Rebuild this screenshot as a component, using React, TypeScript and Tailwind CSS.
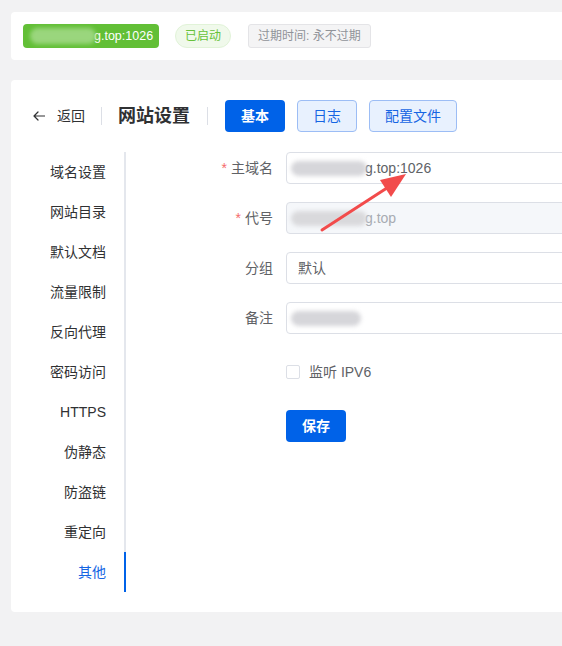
import React from "react";

const font = { fontFamily: '"Liberation Sans", Arial, "Noto Sans CJK SC", sans-serif' };

function Blur({ w, className }: { w: number; className: string }) {
  return <span className={"inline-block h-[15px] rounded-full blur-[2px] " + className} style={{ width: w }} />;
}

const menu = ["域名设置", "网站目录", "默认文档", "流量限制", "反向代理", "密码访问", "HTTPS", "伪静态", "防盗链", "重定向", "其他"];

export default function App() {
  return (
    <div className="w-[562px] h-[646px] overflow-hidden bg-[#f2f2f3] relative" style={font}>
      <div className="w-[620px] ml-[11px] pt-[12px]">
        {/* top card */}
        <div className="bg-white rounded-[4px] h-[48px] flex items-center px-[12px]">
          <div className="h-[24px] w-[136px] rounded-[4px] bg-[#62bf36] flex items-center pl-[7px] text-white text-[12px]">
            <span className="inline-block h-[16px] w-[66px] rounded-full bg-[#9ad67d] blur-[2px]" />
            <span className="-ml-[2px] text-[12.5px]">g.top:1026</span>
          </div>
          <div className="ml-[16px] h-[24px] px-[9px] rounded-full bg-[#f0f9eb] border border-[#e1f3d8] text-[#67c23a] text-[12px] flex items-center">已启动</div>
          <div className="ml-[17px] h-[24px] px-[9px] rounded-[3px] bg-[#f4f4f5] border border-[#e4e4e7] text-[#909399] text-[12px] flex items-center">过期时间: 永不过期</div>
        </div>

        {/* main card */}
        <div className="bg-white rounded-[4px] mt-[20px] pt-[20px] pb-[20px] pl-[22px]">
          <div className="flex items-center h-[32px]">
            <svg width="12" height="10" viewBox="0 0 12 10" className="mr-[12px]">
              <path d="M11.5 5H1M5 1 1 5l4 4" fill="none" stroke="#303133" strokeWidth="1.2" strokeLinecap="round" strokeLinejoin="round" />
            </svg>
            <span className="text-[#303133] text-[14px]">返回</span>
            <span className="w-px h-[18px] bg-[#dcdfe6] mx-[16px]" />
            <span className="text-[#303133] text-[18px] font-bold">网站设置</span>
            <span className="w-px h-[18px] bg-[#dcdfe6] mx-[17px]" />
            <button className="h-[32px] w-[60px] rounded-[4px] bg-[#0062e8] text-white text-[14px] font-bold">基本</button>
            <button className="h-[32px] w-[60px] ml-[12px] rounded-[4px] bg-[#e8f1fe] border border-[#9cbdf5] text-[#1565e3] text-[14px]">日志</button>
            <button className="h-[32px] w-[88px] ml-[12px] rounded-[4px] bg-[#e8f1fe] border border-[#9cbdf5] text-[#1565e3] text-[14px]">配置文件</button>
          </div>

          <div className="flex mt-[20px]">
            <div className="w-[93px] border-r-2 border-[#e4e7ed] flex flex-col">
              {menu.map((m, i) => (
                <div
                  key={m}
                  className={
                    "h-[40px] flex items-center justify-end pr-[18px] text-[14px] " +
                    (i === menu.length - 1 ? "text-[#1565e3] border-r-2 border-[#0062e8] -mr-[2px]" : "text-[#303133]")
                  }
                >
                  {m}
                </div>
              ))}
            </div>

            <div className="flex-1 relative">
              <div className="flex flex-col">
                {[
                  { label: "主域名", req: true, content: <><Blur w={76} className="bg-[#d6d6da]" /><span className="-ml-[2px]">g.top:1026</span></>, dis: false },
                  { label: "代号", req: true, content: <><Blur w={76} className="bg-[#d9d9dc]" /><span className="-ml-[2px]">g.top</span></>, dis: true },
                  { label: "分组", req: false, content: <span className="ml-[7px]">默认</span>, dis: false },
                  { label: "备注", req: false, content: <Blur w={70} className="bg-[#d6d6da]" />, dis: false },
                ].map((r) => (
                  <div key={r.label} className="flex items-center h-[32px] mb-[18px]">
                    <div className="w-[160px] pr-[13px] text-right text-[14px] text-[#606266]">
                      {r.req && <span className="text-[#f56c6c] mr-[4px]">*</span>}
                      {r.label}
                    </div>
                    <div
                      className={
                        "flex-1 h-[32px] rounded-[4px] border border-[#dcdfe6] flex items-center px-[4px] text-[14px] " +
                        (r.dis ? "bg-[#f5f7fa] text-[#a8abb2]" : "bg-white text-[#606266]")
                      }
                    >
                      {r.content}
                    </div>
                  </div>
                ))}
                <div className="flex items-center h-[32px] mt-[4px] pl-[160px]">
                  <span className="w-[14px] h-[14px] rounded-[2px] border border-[#dcdfe6] bg-white" />
                  <span className="ml-[9px] text-[14px] text-[#606266]">监听 IPV6</span>
                </div>
                <div className="pl-[160px] mt-[22px]">
                  <button className="h-[32px] w-[60px] rounded-[4px] bg-[#0062e8] text-white text-[14px] font-bold">保存</button>
                </div>
              </div>
            </div>
          </div>
        </div>
      </div>

      {/* red arrow annotation */}
      <svg className="absolute left-0 top-0 pointer-events-none" width="562" height="646">
        <line x1="322" y1="230" x2="390" y2="186" stroke="#f24b4b" strokeWidth="3" strokeLinecap="round" />
        <polygon points="406,174 380,180 391,197" fill="#f24b4b" />
      </svg>
    </div>
  );
}
